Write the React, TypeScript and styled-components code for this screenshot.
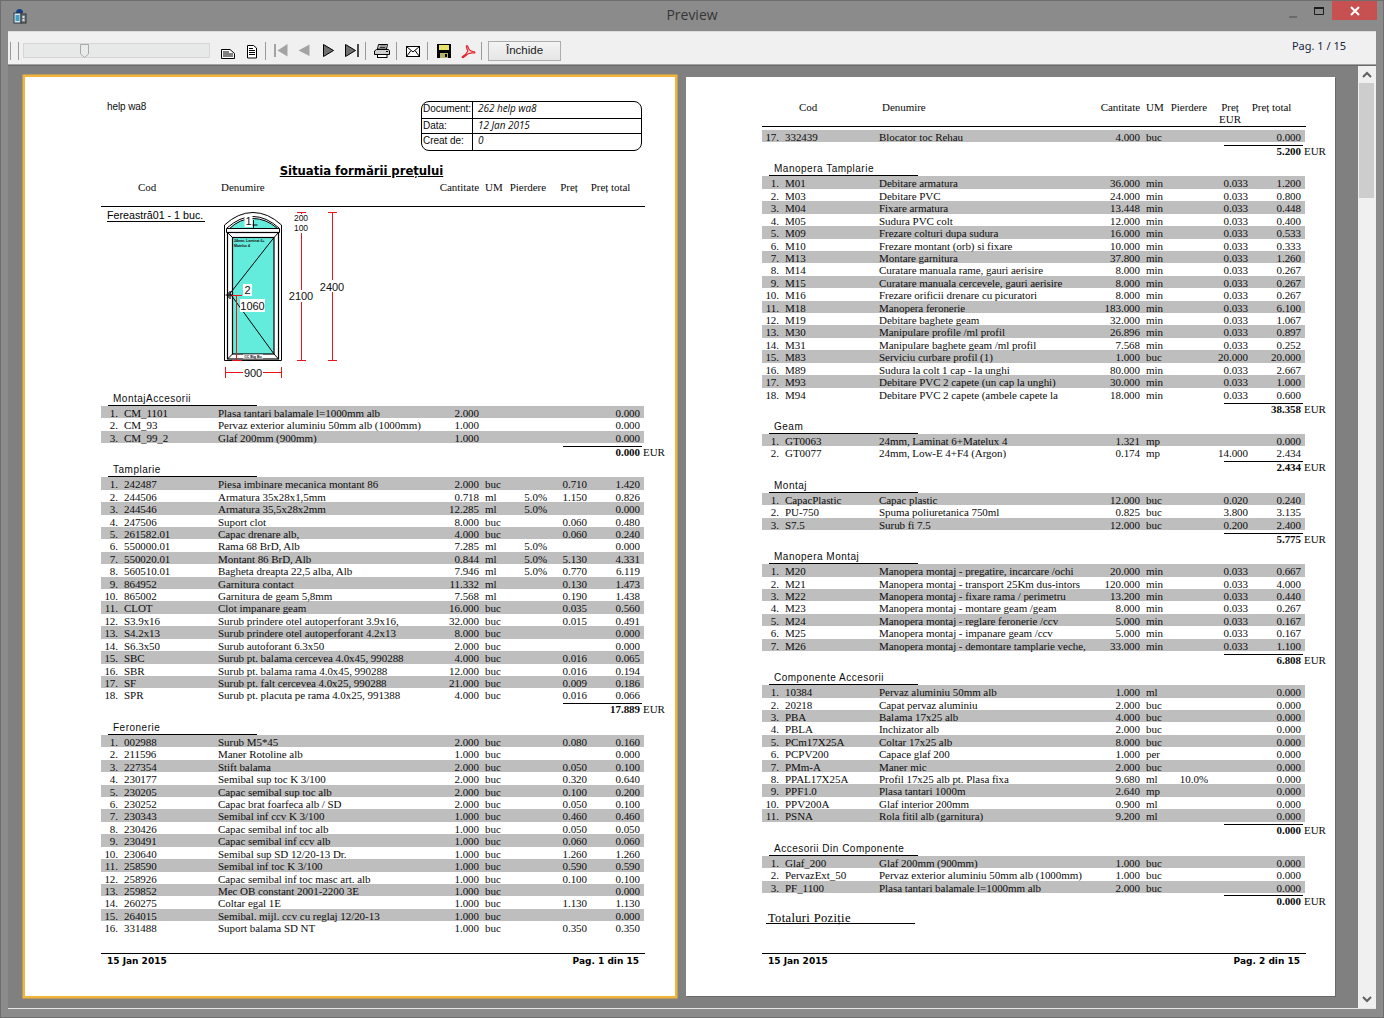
import React from "react";
import styled, { createGlobalStyle } from "styled-components";

const Global = createGlobalStyle`
  html, body { margin: 0; padding: 0; background: #8c8c8c; overflow: hidden; }
  * { box-sizing: border-box; }
`;

const ROW_H = 12.43;

const Win = styled.div`
  width: 1384px; height: 1018px; background: #8b8b8b;
  border: 1px solid #6e6e6e;
  display: flex; flex-direction: column; overflow: hidden;
`;
const TitleBar = styled.div`
  height: 30px; display: grid; grid-template-columns: 1fr auto 1fr; flex: none;
`;
const AppIcon = styled.svg`width: 14px; height: 16px; margin: 7px 0 0 12px; display: block;`;
const TitleText = styled.div`
  font: 14px/28px "Open Sans", "Noto Sans", sans-serif; color: #363636;
`;
const WinCtl = styled.div`display: flex; justify-content: flex-end; padding-right: 6px; height: 20px;`;
const CtlBtn = styled.div<{ $w: number }>`
  width: ${p => p.$w}px; height: 19px; display: flex; align-items: center; justify-content: center;
`;
const CloseBtn = styled(CtlBtn)`background: #c75050;`;
const Body = styled.div`flex: 1; padding: 0 7px; display: flex; flex-direction: column; min-height: 0;`;
const Toolbar = styled.div`
  height: 34px; background: #f0f0f0; border-top: 1px solid #dcdcdc; border-bottom: 1px solid #a2a2a2;
  display: flex; align-items: center; padding-top: 5px; flex: none;
`;
const Grip = styled.div<{ $ml: number }>`width: 1px; height: 18px; background: #9a9a9a; margin-left: ${p => p.$ml}px; flex: none;`;
const Slider = styled.div`
  width: 187px; height: 15px; margin-left: 4px; background: #e7e9e9; border: 1px solid #d6d6d6;
  padding-left: 56px; flex: none; display: flex;
`;
const Thumb = styled.svg`width: 9px; height: 14px; display: block;`;
const ToolIcon = styled.svg<{ $ml: number }>`width: 16px; height: 16px; margin-left: ${p => p.$ml}px; flex: none; display: block;`;
const CloseButton = styled.div`
  width: 73px; height: 20px; margin-left: 6px; border: 1px solid #adadad;
  background: linear-gradient(#f3f3f3, #e6e6e6); text-align: center; color: #1a1a1a;
  font: 11.5px/17px "Liberation Sans", sans-serif; flex: none;
`;
const Pager = styled.div`
  margin-left: auto; padding-right: 30px; align-self: flex-start; margin-top: 2px;
  font: 11px/14px "Noto Sans", sans-serif; color: #17233f;
`;
const Viewer = styled.div`
  height: 944px; flex: none; display: flex; background: #808080;
  border-top: 1px solid #6a6a6a; border-bottom: 1px solid #e6e6e6; overflow: hidden;
`;
const PagesArea = styled.div`flex: 1; display: flex; align-items: flex-start; gap: 11px; padding: 11px 0 0 17px;`;
const Page = styled.div<{ $w: number; $active?: boolean }>`
  width: ${p => p.$w}px; height: 919px; background: #fff; padding-left: 76px; flex: none;
  display: flex; flex-direction: column; color: #0c0c0c;
  font: 11px/${ROW_H}px "Liberation Serif", serif; letter-spacing: -.05px;
  box-shadow: ${p => p.$active ? "0 0 0 2.5px #f2b53c" : "1px 1px 0 #6a6a6a"};
`;
const Scroll = styled.div`width: 18px; flex: none; background: #f0f0f0; display: flex; flex-direction: column;`;
const ScrollBtn = styled.div`height: 17px; display: flex; align-items: center; justify-content: center; flex: none;`;
const ScrollThumb = styled.div`height: 115px; width: 15px; margin-left: 1px; background: #cdcdcd; flex: none;`;
const ScrollFill = styled.div`flex: 1;`;

const DocHead = styled.div`display: flex; margin-top: 24px; height: 50px; flex: none; justify-content: space-between; width: 541px;`;
const Company = styled.div`
  padding-left: 6px; font: 10px/12px "Liberation Sans", sans-serif; letter-spacing: -.1px;
`;
const DocBox = styled.div`
  width: 221px; height: 50px; border: 1px solid #000; border-radius: 8px; overflow: hidden; flex: none;
`;
const DocRow = styled.div`
  height: 15px; display: grid; grid-template-columns: 51px 1fr; border-top: 1px solid #000;
  &:first-child { border-top: 0; height: 16px; }
  &:last-child { height: 17px; }
`;
const DocKey = styled.div`
  border-right: 1px solid #000; padding-left: 1px; font: 10px/13px "Liberation Sans", sans-serif;
`;
const DocVal = styled.div`padding-left: 5px; font: italic 10px/13px "Open Sans", sans-serif;`;
const ReportTitle = styled.div`
  margin-top: 12px; height: 16px; width: 521px; text-align: center; flex: none;
  font: bold 11.7px/16px "DejaVu Sans", sans-serif; text-decoration: underline; color: #000;
`;
const HeadGrid = styled.div<{ $top: number; $h: number }>`
  width: 544px; height: ${p => p.$h}px; padding-top: ${p => p.$top}px; border-bottom: 1px solid #000; flex: none;
  display: grid; grid-template-columns: 120px 202px 56px 6px 22px 39px 39px 55px; line-height: 12px;
  align-items: start;
`;
const HeadCell = styled.div<{ $align?: string; $pl?: number; $pr?: number; $col?: number }>`
  text-align: ${p => p.$align || "left"}; padding: 0 ${p => p.$pr || 0}px 0 ${p => p.$pl || 0}px; white-space: nowrap;
  ${p => p.$col ? `grid-column: ${p.$col};` : ""}
`;
const DrawRow = styled.div`height: 184px; display: flex; flex: none;`;
const PosLabel = styled.div`
  margin: 3px 0 0 6px; width: 98px; height: 12px; border-bottom: 1px solid #000; color: #000;
  font: 10.7px/11px "Liberation Sans", sans-serif; letter-spacing: 0; white-space: nowrap; flex: none;
`;
const Drawing = styled.svg`width: 125px; height: 184px; margin-left: 17px; display: block; flex: none;`;
const SectionBox = styled.section`flex: none;`;
const SecTitle = styled.div`
  height: 15px; width: 149px; margin-left: 7px; padding-left: 5px; border-bottom: 1px solid #000;
  font: 10px/16px "Liberation Sans", sans-serif; letter-spacing: .5px; white-space: nowrap;
`;
const RowEl = styled.div<{ $odd: boolean }>`
  display: grid; grid-template-columns: 17px 6px 94px 205px 56px 6px 22px 40px 40px 53px 4px;
  width: 543px; height: ${ROW_H}px; white-space: nowrap; line-height: 14.4px;
  background: ${p => p.$odd ? "#bebebe" : "transparent"};
`;
const CellR = styled.div`text-align: right; min-width: 0;`;
const CellL = styled.div<{ $col: number }>`grid-column: ${p => p.$col}; min-width: 0;`;
const TotalLine = styled.div`display: flex; margin-left: 462px; height: 16.5px; margin-top: 2.5px; white-space: nowrap;`;
const TotalVal = styled.div`
  width: 79px; height: 15px; border-top: 1px solid #000; text-align: right; padding: 0 2px 0 0; font-weight: 700;
  line-height: 11px;
`;
const TotalCur = styled.div`margin: 1px 0 0 1px; line-height: 11px;`;
const ContRows = styled.div`margin-top: 3px; flex: none;`;
const Totals = styled.div`
  margin-left: 4px; width: 149px; height: 12px; border-bottom: 1px solid #000; padding-left: 2px; flex: none;
  font: 12.5px/12px "Liberation Serif", serif; letter-spacing: .35px; color: #000;
`;
const Footer = styled.div`
  margin-top: auto; width: 544px; height: 43px; border-top: 1px solid #000; flex: none; display: flex;
  justify-content: space-between; padding: 0 6px; color: #000; letter-spacing: 0;
  font: bold 9px/14px "DejaVu Sans", sans-serif;
`;

type Sec = { title: string; rows: string; total: string };

const parse = (s: string) => s.split("\n").map(l => l.trim()).filter(Boolean).map(l => l.split("|"));

const DataRow = ({ i, n, r }: { i: number; n?: number; r: string[] }) => (
  <RowEl $odd={i % 2 === 0}>
    <CellR>{n ?? i + 1}.</CellR>
    <CellL $col={3}>{r[0]}</CellL>
    <CellL $col={4}>{r[1]}</CellL>
    <CellR>{r[2]}</CellR>
    <CellL $col={7}>{r[3]}</CellL>
    <CellR>{r[4]}</CellR>
    <CellR>{r[5]}</CellR>
    <CellR>{r[6]}</CellR>
  </RowEl>
);

const Total = ({ v }: { v: string }) => (
  <TotalLine><TotalVal>{v}</TotalVal><TotalCur>EUR</TotalCur></TotalLine>
);

const Section = ({ s }: { s: Sec }) => (
  <SectionBox>
    <SecTitle>{s.title}</SecTitle>
    {parse(s.rows).map((r, i) => <DataRow key={i} i={i} r={r} />)}
    <Total v={s.total} />
  </SectionBox>
);

const page1: Sec[] = [
  { title: "MontajAccesorii", total: "0.000", rows: `
CM_1101|Plasa tantari balamale l=1000mm alb|2.000||||0.000
CM_93|Pervaz exterior aluminiu 50mm alb (1000mm)|1.000||||0.000
CM_99_2|Glaf 200mm (900mm)|1.000||||0.000` },
  { title: "Tamplarie", total: "17.889", rows: `
242487|Piesa imbinare mecanica montant 86|2.000|buc||0.710|1.420
244506|Armatura 35x28x1,5mm|0.718|ml|5.0%|1.150|0.826
244546|Armatura 35,5x28x2mm|12.285|ml|5.0%||0.000
247506|Suport clot|8.000|buc||0.060|0.480
261582.01|Capac drenare alb,|4.000|buc||0.060|0.240
550000.01|Rama 68 BrD, Alb|7.285|ml|5.0%||0.000
550020.01|Montant 86 BrD, Alb|0.844|ml|5.0%|5.130|4.331
560510.01|Bagheta dreapta 22,5 alba, Alb|7.946|ml|5.0%|0.770|6.119
864952|Garnitura contact|11.332|ml||0.130|1.473
865002|Garnitura de geam 5,8mm|7.568|ml||0.190|1.438
CLOT|Clot impanare geam|16.000|buc||0.035|0.560
S3.9x16|Surub prindere otel autoperforant 3.9x16,|32.000|buc||0.015|0.491
S4.2x13|Surub prindere otel autoperforant 4.2x13|8.000|buc|||0.000
S6.3x50|Surub autoforant 6.3x50|2.000|buc|||0.000
SBC|Surub pt. balama cercevea 4.0x45, 990288|4.000|buc||0.016|0.065
SBR|Surub pt. balama rama 4.0x45, 990288|12.000|buc||0.016|0.194
SF|Surub pt. falt cercevea 4.0x25, 990288|21.000|buc||0.009|0.186
SPR|Surub pt. placuta pe rama 4.0x25, 991388|4.000|buc||0.016|0.066` },
];
const feronerie = `
002988|Surub M5*45|2.000|buc||0.080|0.160
211596|Maner Rotoline alb|1.000|buc|||0.000
227354|Stift balama|2.000|buc||0.050|0.100
230177|Semibal sup toc K 3/100|2.000|buc||0.320|0.640
230205|Capac semibal sup toc alb|2.000|buc||0.100|0.200
230252|Capac brat foarfeca alb / SD|2.000|buc||0.050|0.100
230343|Semibal inf ccv K 3/100|1.000|buc||0.460|0.460
230426|Capac semibal inf toc alb|1.000|buc||0.050|0.050
230491|Capac semibal inf ccv alb|1.000|buc||0.060|0.060
230640|Semibal sup SD 12/20-13 Dr.|1.000|buc||1.260|1.260
258590|Semibal inf toc K 3/100|1.000|buc||0.590|0.590
258926|Capac semibal inf toc masc art. alb|1.000|buc||0.100|0.100
259852|Mec OB constant 2001-2200 3E|1.000|buc|||0.000
260275|Coltar egal 1E|1.000|buc||1.130|1.130
264015|Semibal. mijl. ccv cu reglaj 12/20-13|1.000|buc|||0.000
331488|Suport balama SD NT|1.000|buc||0.350|0.350`;

const page2: Sec[] = [
  { title: "Manopera Tamplarie", total: "38.358", rows: `
M01|Debitare armatura|36.000|min||0.033|1.200
M03|Debitare PVC|24.000|min||0.033|0.800
M04|Fixare armatura|13.448|min||0.033|0.448
M05|Sudura PVC colt|12.000|min||0.033|0.400
M09|Frezare colturi dupa sudura|16.000|min||0.033|0.533
M10|Frezare montant (orb) si fixare|10.000|min||0.033|0.333
M13|Montare garnitura|37.800|min||0.033|1.260
M14|Curatare manuala rame, gauri aerisire|8.000|min||0.033|0.267
M15|Curatare manuala cercevele, gauri aerisire|8.000|min||0.033|0.267
M16|Frezare orificii drenare cu picuratori|8.000|min||0.033|0.267
M18|Manopera feronerie|183.000|min||0.033|6.100
M19|Debitare baghete geam|32.000|min||0.033|1.067
M30|Manipulare profile /ml profil|26.896|min||0.033|0.897
M31|Manipulare baghete geam /ml profil|7.568|min||0.033|0.252
M83|Serviciu curbare profil (1)|1.000|buc||20.000|20.000
M89|Sudura la colt 1 cap - la unghi|80.000|min||0.033|2.667
M93|Debitare PVC 2 capete (un cap la unghi)|30.000|min||0.033|1.000
M94|Debitare PVC 2 capete (ambele capete la|18.000|min||0.033|0.600` },
  { title: "Geam", total: "2.434", rows: `
GT0063|24mm, Laminat 6+Matelux 4|1.321|mp|||0.000
GT0077|24mm, Low-E 4+F4 (Argon)|0.174|mp||14.000|2.434` },
  { title: "Montaj", total: "5.775", rows: `
CapacPlastic|Capac plastic|12.000|buc||0.020|0.240
PU-750|Spuma poliuretanica 750ml|0.825|buc||3.800|3.135
S7.5|Surub fi 7.5|12.000|buc||0.200|2.400` },
  { title: "Manopera Montaj", total: "6.808", rows: `
M20|Manopera montaj - pregatire, incarcare /ochi|20.000|min||0.033|0.667
M21|Manopera montaj - transport 25Km dus-intors|120.000|min||0.033|4.000
M22|Manopera montaj - fixare rama / perimetru|13.200|min||0.033|0.440
M23|Manopera montaj - montare geam /geam|8.000|min||0.033|0.267
M24|Manopera montaj - reglare feronerie /ccv|5.000|min||0.033|0.167
M25|Manopera montaj - impanare geam /ccv|5.000|min||0.033|0.167
M26|Manopera montaj - demontare tamplarie veche,|33.000|min||0.033|1.100` },
  { title: "Componente Accesorii", total: "0.000", rows: `
10384|Pervaz aluminiu 50mm alb|1.000|ml|||0.000
20218|Capat pervaz aluminiu|2.000|buc|||0.000
PBA|Balama 17x25 alb|4.000|buc|||0.000
PBLA|Inchizator alb|2.000|buc|||0.000
PCm17X25A|Coltar 17x25 alb|8.000|buc|||0.000
PCPV200|Capace glaf 200|1.000|per|||0.000
PMm-A|Maner mic|2.000|buc|||0.000
PPAL17X25A|Profil 17x25 alb pt. Plasa fixa|9.680|ml|10.0%||0.000
PPF1.0|Plasa tantari 1000m|2.640|mp|||0.000
PPV200A|Glaf interior 200mm|0.900|ml|||0.000
PSNA|Rola fitil alb (garnitura)|9.200|ml|||0.000` },
  { title: "Accesorii Din Componente", total: "0.000", rows: `
Glaf_200|Glaf 200mm (900mm)|1.000|buc|||0.000
PervazExt_50|Pervaz exterior aluminiu 50mm alb (1000mm)|1.000|buc|||0.000
PF_1100|Plasa tantari balamale l=1000mm alb|2.000|buc|||0.000` },
];

const Head = ({ top, h, two }: { top: number; h: number; two?: boolean }) => (
  <HeadGrid $top={top} $h={h}>
    <HeadCell $pl={37}>Cod</HeadCell>
    <HeadCell>Denumire</HeadCell>
    <HeadCell $align="right">Cantitate</HeadCell>
    <HeadCell $col={5}>UM</HeadCell>
    <HeadCell $align="right">Pierdere</HeadCell>
    <HeadCell $align="center" $pl={7}>Preț{two && <><br />EUR</>}</HeadCell>
    <HeadCell $align="center" $pr={4}>Preț total</HeadCell>
  </HeadGrid>
);

const RED = "#e8141c";
const WindowDrawing = () => (
  <Drawing viewBox="222 207 125 184">
    <g fill="none" stroke="#000">
      <path d="M224.5 225 L224.5 360.5 L281.5 360.5 L281.5 225 Q268 212.500 253 212.500 Q238 212.500 224.5 225 Z" fill="#fff" />
      <path d="M227 228 Q240 216.500 253 216.500 Q266 216.500 279 228" />
      <path d="M229.5 228.5 Q240 218.500 253 218.500 Q266 218.500 277.5 228.5 Z" fill="#63ecdc" />
      <path d="M226.5 228.5H279.5V232.5H226.5Z" fill="#fff" />
      <rect x="227.5" y="232.5" width="51" height="126.5" fill="#fff" strokeWidth="1.2" />
      <rect x="232.5" y="237.5" width="41.5" height="116.5" fill="#63ecdc" strokeWidth="1.2" />
      <path d="M227.5 232.5L232.5 237.5M278.5 232.5L274 237.5M227.5 359L232.5 354M278.5 359L274 354" />
      <path d="M274 237.5L230 293.5L274 354" />
      <path d="M225.5 295H232M228 292V298M230 291V299" strokeWidth="1.2" />
      <path d="M253.5 220V229M249.5 225H257.5" />
    </g>
    <rect x="244.5" y="215" width="8" height="12" fill="#fff" />
    <text x="248.5" y="225" textAnchor="middle" fontFamily="Liberation Sans" fontSize="11" fill="#111">1</text>
    <text x="234" y="242" fontFamily="Liberation Sans" fontSize="3.6" fontWeight="700" fill="#111">24mm, Laminat 6+</text>
    <text x="234" y="247" fontFamily="Liberation Sans" fontSize="3.6" fontWeight="700" fill="#111">Matelux 4</text>
    <rect x="243" y="284" width="9" height="12" fill="#fff" />
    <text x="247.5" y="294" textAnchor="middle" fontFamily="Liberation Sans" fontSize="11" fill="#111">2</text>
    <path d="M232 295.5H242M236.5 295.5V360.5M232 360.5H242" stroke={RED} fill="none" />
    <rect x="240" y="299" width="25" height="13" fill="#fff" />
    <text x="252.5" y="309.5" textAnchor="middle" fontFamily="Liberation Sans" fontSize="11" fill="#111">1060</text>
    <rect x="243" y="354.5" width="20" height="4" fill="#fff" />
    <text x="253" y="358" textAnchor="middle" fontFamily="Liberation Sans" fontSize="3.6" fontWeight="700" fill="#111">CC Big Bu</text>
    <path d="M225.5 367V378M281.5 367V378M225.5 372.5H243M263 372.5H281.5" stroke={RED} fill="none" />
    <text x="253" y="376.5" textAnchor="middle" fontFamily="Liberation Sans" fontSize="11" fill="#111">900</text>
    <path d="M297 212.5H306M301.5 212.5V214M301.5 233V290M301.5 302V360.5M297 360.5H306" stroke={RED} fill="none" />
    <text x="301" y="221" textAnchor="middle" fontFamily="Liberation Sans" fontSize="8.5" fill="#111">200</text>
    <text x="301" y="231" textAnchor="middle" fontFamily="Liberation Sans" fontSize="8.5" fill="#111">100</text>
    <text x="301" y="300" textAnchor="middle" fontFamily="Liberation Sans" fontSize="11" fill="#111">2100</text>
    <path d="M328 212.5H337M332.5 212.5V280M332.5 292V360.5M328 360.5H337" stroke={RED} fill="none" />
    <text x="332" y="290.5" textAnchor="middle" fontFamily="Liberation Sans" fontSize="11" fill="#111">2400</text>
  </Drawing>
);

const App = () => (
  <Win>
    <Global />
    <TitleBar>
      <AppIcon viewBox="0 0 14 16">
        <path d="M3 5Q3 1 6.5 1T10 5Z" fill="#123f8c" />
        <rect x="1" y="5" width="7" height="10" fill="#d8e6ee" stroke="#2b3a44" />
        <rect x="2.5" y="7" width="4" height="6" fill="#3f9fc4" />
        <rect x="8" y="6" width="5" height="9" fill="#6f7f88" stroke="#333" />
        <rect x="9.5" y="8" width="2" height="2" fill="#ddd" /><rect x="9.5" y="11" width="2" height="2" fill="#ddd" />
      </AppIcon>
      <TitleText>Preview</TitleText>
      <WinCtl>
        <CtlBtn $w={26}><svg width="8" height="2" style={{ marginTop: 12 }}><rect width="8" height="2" fill="#6b6b6b" /></svg></CtlBtn>
        <CtlBtn $w={26}><svg width="10" height="8"><path d="M.5 1.5H9.5V7.5H.5Z M.5 1H9.5" fill="none" stroke="#1c1c1c" /><rect width="10" height="2" fill="#1c1c1c" /></svg></CtlBtn>
        <CloseBtn $w={45}><svg width="10" height="10"><path d="M1 1L9 9M9 1L1 9" stroke="#fff" strokeWidth="2" /></svg></CloseBtn>
      </WinCtl>
    </TitleBar>
    <Body>
      <Toolbar>
        <Grip $ml={2} /><Grip $ml={7} />
        <Slider><Thumb viewBox="0 0 9 14"><path d="M.5 .5H8.5V10L4.5 13.5L.5 10Z" fill="#e9eaea" stroke="#a9a9a9" /></Thumb></Slider>
        <ToolIcon $ml={10} viewBox="0 0 16 16"><path d="M1.5 6.5H10L14.5 10.5V15.5H1.5Z" fill="#fff" stroke="#000" /><path d="M3 9H9M3 11H13M3 13H13" stroke="#000" /></ToolIcon>
        <ToolIcon $ml={8} viewBox="0 0 16 16"><path d="M3.5 2.5H9.5L12.5 5V15H3.5Z" fill="#fff" stroke="#000" /><path d="M5 5.5H9M5 7.5H11M5 9.5H11M5 11.5H11" stroke="#000" /></ToolIcon>
        <Grip $ml={5} />
        <ToolIcon $ml={7} viewBox="0 0 16 16"><path d="M1 1H3V14H1Z M14.5 1V13.5L4.5 7.5Z" fill="#a3a3a3" /></ToolIcon>
        <ToolIcon $ml={7} viewBox="0 0 16 16"><path d="M13.5 1.5V13L2.5 7.5Z" fill="#a3a3a3" /></ToolIcon>
        <ToolIcon $ml={9} viewBox="0 0 16 16"><path d="M2.5 1.5V13.5L12.5 7.5Z" fill="#6f6f6f" stroke="#000" /></ToolIcon>
        <ToolIcon $ml={7} viewBox="0 0 16 16"><path d="M1.5 1.5V13.5L11.5 7.5Z" fill="#6f6f6f" stroke="#000" /><path d="M14 1V14" stroke="#000" strokeWidth="1.4" /></ToolIcon>
        <Grip $ml={5} />
        <ToolIcon $ml={8} viewBox="0 0 16 16"><path d="M4.5 1.5H13.5L12.5 6H3.5Z" fill="#fff" stroke="#000" /><path d="M5.5 3H12M5.5 4.5H11.5" stroke="#000" strokeWidth=".8" /><path d="M2.5 6.5H14.5L15.5 8V11.5H.5V8Z" fill="#cfcfcf" stroke="#000" /><rect x="3.5" y="11.5" width="9.5" height="3" fill="#fff" stroke="#000" /><path d="M12 8.5H14" stroke="#000" /></ToolIcon>
        <Grip $ml={6} />
        <ToolIcon $ml={8} viewBox="0 0 16 16"><rect x="1.5" y="3.5" width="13" height="10" fill="#fff" stroke="#000" /><path d="M1.5 3.5L8 9L14.5 3.5M1.5 13.5L6 7.5M14.5 13.5L10 7.5" fill="none" stroke="#000" /></ToolIcon>
        <Grip $ml={6} />
        <ToolIcon $ml={8} viewBox="0 0 16 16"><path d="M1 1H15V15H1Z" fill="#000" /><rect x="3" y="2" width="10" height="5" fill="#e8e26a" /><rect x="4" y="10" width="8" height="5" fill="#b9b36a" /><rect x="9" y="11" width="2" height="3" fill="#000" /></ToolIcon>
        <ToolIcon $ml={8} viewBox="0 0 16 16"><path d="M7 2.5C6 2.5 6.3 5 8 8C6.5 10.5 4 13 2.5 13.5C1.5 14 2.5 15.5 4.5 13.5C7 11 11 9.5 14 10C15.5 10 15 8.5 13 8.5C10.5 8.5 8.5 6 8 4C7.8 3 7.5 2.5 7 2.5Z" fill="none" stroke="#e0262b" strokeWidth="1.2" /></ToolIcon>
        <Grip $ml={5} />
        <CloseButton>Închide</CloseButton>
        <Pager>Pag. 1 / 15</Pager>
      </Toolbar>
      <Viewer>
        <PagesArea>
          <Page $w={650} $active>
            <DocHead>
              <Company>help wa8</Company>
              <DocBox>
                <DocRow><DocKey>Document:</DocKey><DocVal>262 help wa8</DocVal></DocRow>
                <DocRow><DocKey>Data:</DocKey><DocVal>12 Jan 2015</DocVal></DocRow>
                <DocRow><DocKey>Creat de:</DocKey><DocVal>0</DocVal></DocRow>
              </DocBox>
            </DocHead>
            <ReportTitle>Situatia formării prețului</ReportTitle>
            <Head top={2} h={28} />
            <DrawRow>
              <PosLabel>Fereastră01 - 1 buc.</PosLabel>
              <WindowDrawing />
            </DrawRow>
            {page1.map(s => <Section key={s.title} s={s} />)}
            <SectionBox>
              <SecTitle>Feronerie</SecTitle>
              {parse(feronerie).map((r, i) => <DataRow key={i} i={i} r={r} />)}
            </SectionBox>
            <Footer><span>15 Jan 2015</span><span>Pag. 1 din 15</span></Footer>
          </Page>
          <Page $w={649}>
            <Head top={24} h={50} two />
            <ContRows>
              <DataRow i={0} n={17} r={["332439", "Blocator toc Rehau", "4.000", "buc", "", "", "0.000"]} />
            </ContRows>
            <Total v="5.200" />
            {page2.map(s => <Section key={s.title} s={s} />)}
            <Totals>Totaluri Poziție</Totals>
            <Footer><span>15 Jan 2015</span><span>Pag. 2 din 15</span></Footer>
          </Page>
        </PagesArea>
        <Scroll>
          <ScrollBtn><svg width="10" height="7"><path d="M1 6L5 2L9 6" fill="none" stroke="#606060" strokeWidth="2" /></svg></ScrollBtn>
          <ScrollThumb />
          <ScrollFill />
          <ScrollBtn><svg width="10" height="7"><path d="M1 1L5 5L9 1" fill="none" stroke="#606060" strokeWidth="2" /></svg></ScrollBtn>
        </Scroll>
      </Viewer>
    </Body>
  </Win>
);

export default App;
